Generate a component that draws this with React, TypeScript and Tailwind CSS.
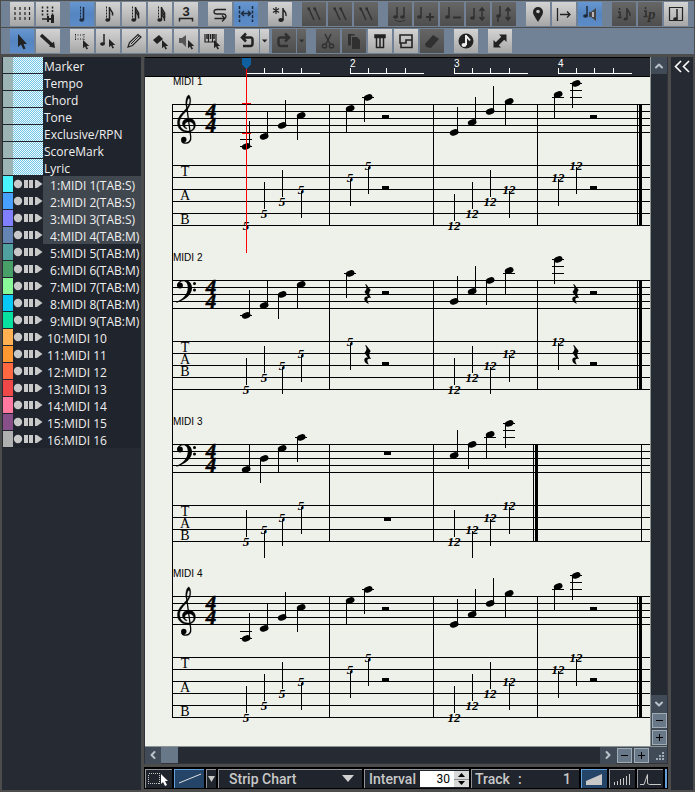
import type { ReactNode } from "react";
import { clsx } from "clsx";
import { ChevronUp, ChevronDown, ChevronLeft, ChevronRight } from "lucide-react";

/* ---------- toolbar ---------- */

type Tone = "light" | "active" | "off";

const toneClass: Record<Tone, string> = {
  light: "text-[#222] bg-linear-to-b from-[#d3d3d3] via-[#bebebe] to-[#a6a6a6]",
  active: "text-[#1d2b3d] bg-linear-to-b from-[#6797d0] via-[#5585c0] to-[#5d8dc8]",
  off: "text-[#303030] bg-linear-to-b from-[#666] via-[#5a5a5a] to-[#4e4e4e]",
};

interface Tool {
  label: string;
  tone?: Tone;
  icon: ReactNode;
}

function ToolButton({ label, tone = "light", icon }: Tool) {
  return (
    <button aria-label={label} className={clsx("w-6 h-6 shrink-0", toneClass[tone])}>
      <svg viewBox="0 0 24 24" className="block w-6 h-6" fill="none" stroke="currentColor" strokeWidth="1.5">
        {icon}
      </svg>
    </button>
  );
}

function DropButton({ label, tone = "light" }: { label: string; tone?: Tone }) {
  return (
    <button aria-label={label} className={clsx("w-[9px] h-6 shrink-0", toneClass[tone])}>
      <svg viewBox="0 0 9 24" className="block w-[9px] h-6" fill="currentColor">
        <path d="M2 10.500h5.400L4.700 13.500z" />
      </svg>
    </button>
  );
}

const Pointer = ({ x, y }: { x: number; y: number }) => (
  <path d={`M${x} ${y}v8.200l2-1.600 1.500 3 1.500-.8-1.500-2.800h2.800z`} fill="currentColor" stroke="none" />
);

const NoteStem = ({ flags = 0 }: { flags?: number }) => (
  <>
    <path d="M10.500 4.500v14" strokeDasharray="2 1" strokeWidth="1" />
    <path d="M13.500 5v13" />
    <ellipse cx="11.700" cy="18" rx="2.400" ry="1.700" fill="currentColor" stroke="none" />
    {flags > 0 && <path d="M13.500 6c.5 2.500 4 3 3 7.500" />}
    {flags > 1 && <path d="M13.500 9c.5 2.500 4 3 3 7.500" />}
    {flags > 2 && <path d="M13.500 12c.5 2.500 4 3 3 7" />}
  </>
);

const Strings = () => (
  <g strokeWidth="1.500">
    <path d="M7 7l5 11M13 7l5 11" />
    <path d="M5 5.500h3v3H6zM11 5.500h3v3h-2z" fill="currentColor" stroke="none" />
  </g>
);

const SmallNote = ({ x, y }: { x: number; y: number }) => (
  <>
    <path d={`M${x + 4} ${y}v10`} />
    <ellipse cx={x + 2.5} cy={y + 10} rx="2.400" ry="1.700" fill="currentColor" stroke="none" />
  </>
);

const topTools: Tool[][] = [
  [
    { label: "Grid", icon: <path d="M6.500 5v15M11.500 5v15M16.500 5v15M21 5v15" transform="translate(-1.500)" strokeDasharray="3 2" strokeWidth="1.200" /> },
    {
      label: "Snap to grid",
      icon: (
        <>
          <path d="M6.500 4.500v9M11.500 4.500v9M16.500 4.500v9" strokeDasharray="2 1.500" />
          <path d="M6 17h12" />
          <path d="M11 14h2v2h2v-3h3v8h-3v-3h-2v2h-2z" fill="currentColor" stroke="none" />
        </>
      ),
    },
  ],
  [
    { label: "Quarter", tone: "active", icon: <NoteStem /> },
    { label: "Eighth", icon: <NoteStem flags={1} /> },
    { label: "Sixteenth", icon: <NoteStem flags={2} /> },
    { label: "Thirty-second", icon: <NoteStem flags={3} /> },
    {
      label: "Triplet",
      icon: (
        <>
          <text x="12" y="14" textAnchor="middle" fill="currentColor" stroke="none" fontSize="13" fontWeight="700" fontFamily="Liberation Sans, sans-serif">3</text>
          <path d="M5.500 19.500v-3h13v3" />
        </>
      ),
    },
  ],
  [
    { label: "Loop", icon: <path d="M18 7.500H9c-4 0-4 4.500 0 4.500h6M6.500 16.500H17M15 12c4 0 3 3 2.500 4M14 13.500l3 3-3 3" strokeWidth="1.300" /> },
    {
      label: "Fit width",
      tone: "active",
      icon: (
        <>
          <path d="M5.500 4v16M18.500 4v16" strokeDasharray="3 1.500" />
          <path d="M7 11.500h10M10 9l-2.500 2.500L10 14M14 9l2.500 2.500L14 14" />
        </>
      ),
    },
  ],
  [
    {
      label: "New note",
      icon: (
        <>
          <path d="M8 5v7M5 6.500l6 4M11 6.500l-6 4" strokeWidth="1.200" />
          <path d="M15 6v12M15 7c1 3 4 3 3 7" />
          <ellipse cx="13" cy="18" rx="2.700" ry="2" fill="currentColor" stroke="none" />
        </>
      ),
    },
  ],
  [
    { label: "Tremolo 1", tone: "off", icon: <Strings /> },
    { label: "Tremolo 2", tone: "off", icon: <Strings /> },
    { label: "Tremolo 3", tone: "off", icon: <Strings /> },
  ],
  [
    { label: "Tie", tone: "off", icon: <><SmallNote x={5} y={5} /><SmallNote x={12} y={5} /><path d="M7 18c3 2 7 2 10 0" strokeWidth="1" /></> },
    { label: "Add note", tone: "off", icon: <><SmallNote x={3} y={5} /><path d="M16 11v8M12 15h8" strokeWidth="2" /></> },
    { label: "Remove note", tone: "off", icon: <><SmallNote x={5} y={5} /><path d="M13 15.500h8" strokeWidth="2" /></> },
    { label: "Move voice", tone: "off", icon: <><SmallNote x={4} y={6} /><path d="M16 6v12M13.500 9L16 6l2.500 3M13.500 15l2.500 3 2.500-3" /></> },
    { label: "Move staff", tone: "off", icon: <><SmallNote x={4} y={4} /><path d="M6 14v6M16 6v12M13.500 9L16 6l2.500 3M13.500 15l2.500 3 2.500-3" /></> },
  ],
  [
    { label: "Marker pin", icon: <><path d="M12 20C9 15 7 12.500 7 10a5 5 0 0 1 10 0c0 2.500-2 5-5 10z" fill="currentColor" stroke="none" /><circle cx="12" cy="9.500" r="1.800" fill="#c4c4c4" stroke="none" /></> },
    { label: "Play from here", icon: <path d="M5.500 6v13M8 12.500h10M15 9.500l3 3-3 3" strokeWidth="1.300" /> },
    {
      label: "Note sound",
      tone: "active",
      icon: (
        <>
          <SmallNote x={5} y={4} />
          <path d="M11 10h2l5-4v13l-5-4h-2z" fill="#444" stroke="none" />
          <path d="M14 10h2v5h-2z" fill="#b8b8b8" stroke="none" />
        </>
      ),
    },
  ],
  [
    { label: "Note info", tone: "off", icon: <><path d="M7.500 6v2M6 10h2v5M5.500 15.500h4M15 6v11M15 7c1 3 4 3 3 7" /><ellipse cx="13.500" cy="17" rx="2" ry="1.500" fill="currentColor" stroke="none" /></> },
    {
      label: "Dynamics info",
      tone: "off",
      icon: (
        <>
          <path d="M7.500 5v2M6 9h2v5M5.500 14.500h4" />
          <text x="10" y="17" fill="currentColor" stroke="none" fontSize="15" fontWeight="700" fontStyle="italic" fontFamily="Liberation Serif, serif">p</text>
        </>
      ),
    },
    { label: "Score frame", icon: <><path d="M5.500 5.500h13v13h-13z" strokeWidth="1.200" /><SmallNote x={9} y={7} /></> },
  ],
];

const eraser = <path d="M5 15l8-9 6 4-8 9-5-1z" fill="currentColor" stroke="none" />;

const editLeft: Tool[][] = [
  [
    { label: "Select", tone: "active", icon: <path d="M8 5v13l3-2.500 2.500 5 2-1-2-4.500h3.500z" fill="#222" stroke="none" /> },
    { label: "Draw line", icon: <><path d="M5 6l11 10" strokeWidth="3.500" /><path d="M13 17.500L18 12.500 19 19z" fill="currentColor" stroke="none" /></> },
  ],
  [
    { label: "Range select", icon: <><path d="M5 6h10M5 10h9M5.500 5v6M14 5v6" strokeDasharray="1 1.500" strokeWidth="1" /><Pointer x={13} y={11} /></> },
    { label: "Note select", icon: <><SmallNote x={4} y={5} /><Pointer x={13} y={10} /></> },
    { label: "Pencil", icon: <><path d="M6 18l1.500-4.500L16 5.500l3 2.500-8.500 8.500z" strokeWidth="1.200" /><path d="M9 15l8-8" strokeWidth="1" /></> },
    { label: "Eraser", icon: <><path d="M5 11l6-5 4 4-6 5z" fill="currentColor" stroke="none" /><Pointer x={14} y={11} /></> },
    { label: "Audition", icon: <><path d="M5 9h3l4-3v12l-4-4H5z" fill="#555" stroke="none" /><Pointer x={14} y={11} /></> },
    { label: "Keyboard", icon: <><path d="M5 5v8h11V5M8.500 5v8M12.500 5v8" strokeWidth="1.200" /><path d="M7 5v5M10.500 5v5M14 5v5" strokeWidth="1.500" /><Pointer x={14} y={11} /></> },
  ],
];

const undo = <path d="M9 8.500h6.500c2 0 2 1 2 2.500v3.500c0 2-1 2.500-2 2.500H8M11 4.500l-4 4 4 4" strokeWidth="2.500" />;
const redo = <path d="M15 8.500H8.500c-2 0-2 1-2 2.500v3.500c0 2 1 2.500 2 2.500H16M13 4.500l4 4-4 4" strokeWidth="2.500" />;

const editRight: Tool[][] = [
  [
    { label: "Cut", tone: "off", icon: <><path d="M9 5l5 10M15 5l-5 10" /><circle cx="8.500" cy="17" r="2" /><circle cx="15.500" cy="17" r="2" /></> },
    { label: "Copy", tone: "off", icon: <path d="M6 5h6l1 1.500H9v10H6zM10 8h5l3 3v9h-8z" fill="currentColor" stroke="none" /> },
    { label: "Paste", icon: <><path d="M7 6h10v2.500H7z" fill="currentColor" /><path d="M8.500 9v9.500h7V9M12 9v9" strokeWidth="1.500" /></> },
    { label: "Merge", icon: <path d="M6 6h12v5h-6v3H6zM7 14v4.500h11v-7" strokeWidth="1.600" /> },
    { label: "Clear", tone: "off", icon: eraser },
  ],
  [
    {
      label: "Score",
      icon: (
        <>
          <circle cx="12" cy="12" r="7.500" fill="currentColor" stroke="none" />
          <path d="M12 6v10M12 6.500l4 5" stroke="#eee" strokeWidth="2" />
          <ellipse cx="10" cy="16" rx="2.500" ry="2" fill="#eee" stroke="none" />
        </>
      ),
    },
  ],
  [{ label: "Expand", icon: <><path d="M8 16l8-8" strokeWidth="4" /><path d="M11 5.500h7.500V13zM5.500 11v7.500H13z" fill="currentColor" stroke="none" /></> }],
];

function ToolGroups({ groups }: { groups: Tool[][] }) {
  return (
    <>
      {groups.map((group) => (
        <div key={group[0].label} className="flex gap-[2px]">
          {group.map((tool) => (
            <ToolButton key={tool.label} {...tool} />
          ))}
        </div>
      ))}
    </>
  );
}

/* ---------- track list ---------- */

const conductorTracks = ["Marker", "Tempo", "Chord", "Tone", "Exclusive/RPN", "ScoreMark", "Lyric"];

const tracks = [
  { name: " 1:MIDI 1(TAB:S)", color: "bg-[#48f4ff]", selected: true },
  { name: " 2:MIDI 2(TAB:S)", color: "bg-[#48a0ff]", selected: true },
  { name: " 3:MIDI 3(TAB:S)", color: "bg-[#8080ff]", selected: true },
  { name: " 4:MIDI 4(TAB:M)", color: "bg-[#6484b4]", selected: true },
  { name: " 5:MIDI 5(TAB:M)", color: "bg-[#50a0a0]" },
  { name: " 6:MIDI 6(TAB:M)", color: "bg-[#48a068]" },
  { name: " 7:MIDI 7(TAB:M)", color: "bg-[#88f898]" },
  { name: " 8:MIDI 8(TAB:M)", color: "bg-[#08c8f8]" },
  { name: " 9:MIDI 9(TAB:M)", color: "bg-[#08e0a0]" },
  { name: "10:MIDI 10", color: "bg-[#ffb050]" },
  { name: "11:MIDI 11", color: "bg-[#ff9830]" },
  { name: "12:MIDI 12", color: "bg-[#ff6840]" },
  { name: "13:MIDI 13", color: "bg-[#f04848]" },
  { name: "14:MIDI 14", color: "bg-[#ff78a0]" },
  { name: "15:MIDI 15", color: "bg-[#885088]" },
  { name: "16:MIDI 16", color: "bg-[#b0b0b0]" },
];

function TrackList() {
  return (
    <aside className="w-[139px] shrink-0 bg-[#262a32] pl-px font-['Open_Sans','Noto_Sans',sans-serif] text-xs leading-4 text-[#f0f0f0]">
      <ul className="bg-[#20242c]">
        {conductorTracks.map((name) => (
          <li key={name} className="flex h-[17px]">
            <span className="w-2.5 h-4 bg-[#9cb4b4]" />
            <span className="w-[30px] h-4 bg-[#a4def0] bg-[conic-gradient(#f4f8fa_25%,#70c8e8_0_50%,#f4f8fa_0_75%,#70c8e8_0)] bg-size-[2px_2px]" />
            <button className="pl-px pt-[2px] whitespace-nowrap text-left">{name}</button>
          </li>
        ))}
        {tracks.map(({ name, color, selected }) => (
          <li key={name} className="flex h-[17px]">
            <span className={clsx("w-2.5 h-4", color)} />
            <svg className="w-[30px] h-4" viewBox="0 0 30 16" fill="#c8c8c8">
              <circle cx="5" cy="8" r="4.200" />
              <path d="M11 4h4v8h-4zM16 4h4v8h-4zM22 4h2l5.500 4-5.500 4h-2z" />
            </svg>
            <button className={clsx("flex-1 h-[17px] pl-1 pt-[2px] whitespace-pre text-left", selected && "bg-[#41474f]")}>{name}</button>
          </li>
        ))}
      </ul>
    </aside>
  );
}

/* ---------- score ---------- */

// Horizontal position of every beat, measured from the left edge of the score
const BEATS = [
  [101, 119, 137, 156],
  [205, 223, 241, 260],
  [309, 327, 345, 364],
  [413, 431, 449, 468],
];

// step: half spaces below the top staff line, line: tab line counted from the top
interface Note {
  bar: number;
  beat: number;
  step: number;
  line: number;
  up?: boolean;
}

interface Rest {
  bar: number;
  kind: "quarter" | "half" | "whole";
}

interface Part {
  name: string;
  clef: "treble" | "bass";
  top: number;
  tabTop: number;
  tabLines: number;
  letters: number[];
  bars: number[];
  end: number;
  notes: Note[];
  rests: Rest[];
}

const guitarNotes: Note[] = [
  { bar: 0, beat: 0, step: 12, line: 5, up: true },
  { bar: 0, beat: 1, step: 9, line: 4, up: true },
  { bar: 0, beat: 2, step: 6, line: 3, up: true },
  { bar: 0, beat: 3, step: 3, line: 2 },
  { bar: 1, beat: 0, step: 1, line: 1 },
  { bar: 1, beat: 1, step: -2, line: 0 },
  { bar: 2, beat: 0, step: 8, line: 5, up: true },
  { bar: 2, beat: 1, step: 5, line: 4, up: true },
  { bar: 2, beat: 2, step: 2, line: 3, up: true },
  { bar: 2, beat: 3, step: -1, line: 2 },
  { bar: 3, beat: 0, step: -3, line: 1 },
  { bar: 3, beat: 1, step: -6, line: 0 },
];

const guitarRests: Rest[] = [
  { bar: 1, kind: "half" },
  { bar: 3, kind: "half" },
];

const parts: Part[] = [
  { name: "MIDI 1", clef: "treble", top: 27, tabTop: 88, tabLines: 6, letters: [99, 123, 147], bars: [184, 288, 392], end: 492, notes: guitarNotes, rests: guitarRests },
  {
    name: "MIDI 2",
    clef: "bass",
    top: 203,
    tabTop: 264,
    tabLines: 5,
    letters: [275, 287, 299],
    bars: [184, 288, 392],
    end: 492,
    notes: [
      { bar: 0, beat: 0, step: 10, line: 4, up: true },
      { bar: 0, beat: 1, step: 7, line: 3, up: true },
      { bar: 0, beat: 2, step: 4, line: 2 },
      { bar: 0, beat: 3, step: 1, line: 1 },
      { bar: 1, beat: 0, step: -2, line: 0 },
      { bar: 2, beat: 0, step: 6, line: 4, up: true },
      { bar: 2, beat: 1, step: 3, line: 3, up: true },
      { bar: 2, beat: 2, step: 0, line: 2 },
      { bar: 2, beat: 3, step: -3, line: 1 },
      { bar: 3, beat: 0, step: -6, line: 0 },
    ],
    rests: [
      { bar: 1, kind: "quarter" },
      { bar: 1, kind: "half" },
      { bar: 3, kind: "quarter" },
      { bar: 3, kind: "half" },
    ],
  },
  {
    name: "MIDI 3",
    clef: "bass",
    top: 367,
    tabTop: 428,
    tabLines: 4,
    letters: [439, 451, 463],
    bars: [184, 288, 496],
    end: 388,
    notes: [
      { bar: 0, beat: 0, step: 7, line: 3, up: true },
      { bar: 0, beat: 1, step: 4, line: 2 },
      { bar: 0, beat: 2, step: 1, line: 1 },
      { bar: 0, beat: 3, step: -2, line: 0 },
      { bar: 2, beat: 0, step: 3, line: 3, up: true },
      { bar: 2, beat: 1, step: 0, line: 2 },
      { bar: 2, beat: 2, step: -3, line: 1 },
      { bar: 2, beat: 3, step: -6, line: 0 },
    ],
    rests: [{ bar: 1, kind: "whole" }],
  },
  { name: "MIDI 4", clef: "treble", top: 519, tabTop: 580, tabLines: 6, letters: [591, 615, 639], bars: [184, 288, 392], end: 492, notes: guitarNotes, rests: guitarRests },
];

function TrebleClef({ y }: { y: number }) {
  return (
    <g transform={`translate(32 ${y})`} shapeRendering="auto">
      <path d="M9 2C8.200-4 10-9 12-9c2 2 2.200 7 .8 10.500C11 6 6.500 9.500 4.300 13 2.800 15.500 2.500 17.500 2.700 19.500 3 24 6.500 27 11 27c3.500 0 5.800-2.200 5.800-5 0-2.500-2-4.300-4.800-4.300-2.700 0-4.200 1.500-4.200 3.300 0 1.600.8 2.600 2.200 3.400l-.4.6C7 24 5.400 22 5.400 19.800c0-3.300 2.900-5.600 6.600-5.600 3.800 0 6.400 2.800 6.400 6.800 0 4.400-3.400 7.200-7.900 7.200C4.500 28.200.5 24.500.5 18.800.5 14 3.500 10.500 7 7c3-3 5-5.500 5.600-8.500.4-2.500 0-4.300-.6-4.300C10.800-5.600 9.800-2.500 10 1z" stroke="#000" strokeWidth=".4" />
      <path d="M9.500 1l4.200 31.500c.6 4.500-2 6.700-5 6.700-2 0-3.500-1-4-2.700" fill="none" stroke="#000" strokeWidth="1.300" />
      <circle cx="6.800" cy="35.500" r="2.700" />
    </g>
  );
}

function BassClef({ y }: { y: number }) {
  return (
    <g transform={`translate(31 ${y})`} shapeRendering="auto">
      <path d="M1.200 6C1 2.500 4 0 8 0c5 0 8 3 8 8 0 7-7 12-15.500 14.800L.3 22C7 19 11.800 14.500 11.800 7.500c0-4-1.500-6.300-4.500-6.300C4.500 1.200 2.500 3 2.600 5z" />
      <circle cx="4" cy="5.500" r="2.900" />
      <circle cx="18.500" cy="3.500" r="1.500" />
      <circle cx="18.500" cy="10" r="1.500" />
    </g>
  );
}

function QuarterRest({ x, y }: { x: number; y: number }) {
  return (
    <path
      transform={`translate(${x} ${y})`}
      shapeRendering="auto"
      d="M2 0l4.700 6c-2 2.500-2 4.500.5 8-3-1-4.200.5-3.800 2 .3 2 1.600 4 1.600 4C1.500 18.500 0 16.500.3 14.500c.5-1.700 2.200-2.200 3.700-1.700L.5 8C3 5 3 3.500 1.200.6z"
    />
  );
}

function ledgerSteps(step: number) {
  const out: number[] = [];
  for (let s = -2; s >= step; s -= 2) out.push(s);
  for (let s = 10; s <= step; s += 2) out.push(s);
  return out;
}

function PartStaff({ part }: { part: Part }) {
  const { top, tabTop, tabLines, end } = part;
  const height = tabTop + (tabLines - 1) * 12 - top + 1;
  const lines = [
    ...[0, 1, 2, 3, 4].map((i) => top + i * 7),
    ...Array.from({ length: tabLines }, (_, i) => tabTop + i * 12),
  ];

  return (
    <g>
      <text x="28" y={top - 19} fontSize="10" fontFamily="Liberation Sans, sans-serif">{part.name}</text>
      {lines.map((y) => (
        <rect key={y} x="27" y={y} width="100%" height="1" />
      ))}
      {part.bars.map((x) => (
        <rect key={x} x={x} y={top} width="1" height={height} />
      ))}
      <rect x={end} y={top} width="1" height={height} />
      <rect x={end + 2} y={top} width="3" height={height} />

      {part.clef === "treble" ? <TrebleClef y={top} /> : <BassClef y={top} />}
      <text fontFamily="Liberation Serif, serif" fontSize="21" fontWeight="700" fontStyle="italic" textAnchor="middle" stroke="#000" strokeWidth=".5">
        <tspan x="66" y={top + 14}>4</tspan>
        <tspan x="66" y={top + 28}>4</tspan>
      </text>
      <g fontFamily="Liberation Serif, serif" fontSize="14" textAnchor="middle">
        {["T", "A", "B"].map((letter, i) => (
          <text key={letter} x="40" y={part.letters[i]}>{letter}</text>
        ))}
      </g>

      {part.notes.map((n) => {
        const x = BEATS[n.bar][n.beat];
        const y = top + Math.round(n.step * 3.5);
        const ty = tabTop + n.line * 12;
        return (
          <g key={`${n.bar}-${n.beat}`}>
            <ellipse cx={x} cy={y + 0.5} rx="4.500" ry="3" transform={`rotate(-20 ${x} ${y})`} shapeRendering="auto" />
            <rect x={n.up ? x + 3 : x - 4} y={n.up ? y - 25 : y} width="1" height="25" />
            {ledgerSteps(n.step).map((s) => (
              <rect key={s} x={x - 6} y={top + s * 3.5} width="12" height="1" />
            ))}
            <text x={x} y={ty + 5} textAnchor="middle" fontSize="13" fontWeight="700" fontStyle="italic" fontFamily="Liberation Serif, serif">
              {n.bar < 2 ? "5" : "12"}
            </text>
            <rect x={x} y={n.up ? ty - 31 : ty + 2} width="1" height="27" />
          </g>
        );
      })}

      {part.rests.map(({ bar, kind }) => {
        const x = BEATS[bar][0];
        if (kind === "quarter") {
          return (
            <g key={`${bar}-${kind}`}>
              <QuarterRest x={x + 14} y={top + 4} />
              <QuarterRest x={x + 14} y={tabTop + 4} />
            </g>
          );
        }
        if (kind === "whole") {
          return (
            <g key={`${bar}-${kind}`}>
              <rect x={x + 34} y={top + 7} width="7" height="4" />
              <rect x={x + 34} y={tabTop + 12} width="7" height="4" />
            </g>
          );
        }
        return (
          <g key={`${bar}-${kind}`}>
            <rect x={x + 32} y={top + 11} width="7" height="3" />
            <rect x={x + 32} y={tabTop + 21} width="7" height="3" />
          </g>
        );
      })}
    </g>
  );
}

function Ruler() {
  return (
    <svg className="block w-full h-5 bg-[#262a32]" shapeRendering="crispEdges" role="img" aria-label="Measures">
      <rect width="100%" height="1" fill="#000" />
      <rect y="19" width="100%" height="1" fill="#000" />
      <g fill="#fff" fontFamily="Liberation Sans, sans-serif" fontSize="10">
        {BEATS.map((beats, bar) => (
          <g key={bar}>
            <rect x={beats[0]} y="16" width="74" height="1" />
            {beats.map((x) => (
              <rect key={x} x={x} y="11" width="1" height="5" />
            ))}
            {bar > 0 && <text x={beats[0]} y="10">{bar + 1}</text>}
          </g>
        ))}
      </g>
      <rect x="101" y="10" width="1" height="10" fill="#f00" />
      <path d="M97 1h9v7l-4.500 4-4.500-4z" fill="#1060a0" />
    </svg>
  );
}

function Score() {
  return (
    <svg className="block w-full h-[669px] bg-[#eef1ea]" shapeRendering="crispEdges" role="img" aria-label="Score">
      <rect x="27" y="27" width="1" height="614" />
      {parts.map((part) => (
        <PartStaff key={part.name} part={part} />
      ))}
      <g fill="#f00">
        <rect x="101" width="1" height="176" />
        <rect x="97" y="26" width="9" height="1" />
        <rect x="97" y="56" width="9" height="1" />
      </g>
    </svg>
  );
}

/* ---------- scroll bars ---------- */

function ArrowButton({ label, children }: { label: string; children: ReactNode }) {
  return (
    <button aria-label={label} className="w-4 h-[17px] shrink-0 flex items-center justify-center bg-[#414b57] text-[#b8c4cc]">
      {children}
    </button>
  );
}

function ZoomButton({ label, plus }: { label: string; plus?: boolean }) {
  return (
    <button aria-label={label} className="w-[15px] h-[15px] shrink-0 bg-[#687888] border border-[#a0acb4]">
      <svg viewBox="0 0 13 13" className="block w-[13px] h-[13px]" shapeRendering="crispEdges">
        <path d="M3 6h7v1H3z" />
        {plus && <path d="M6 3h1v7H6z" />}
      </svg>
    </button>
  );
}

function ScorePane() {
  return (
    <section className="border border-[#30343a] border-t-0">
      <div className="flex">
        <div className="flex-1 min-w-0">
          <Ruler />
          <Score />
        </div>
        <div className="w-[17px] shrink-0 flex flex-col items-center border-l border-[#8c9494] bg-[#262a32]">
          <ArrowButton label="Scroll up"><ChevronUp size={12} strokeWidth={4} /></ArrowButton>
          <div className="flex-1" />
          <ArrowButton label="Scroll down"><ChevronDown size={12} strokeWidth={4} /></ArrowButton>
          <div className="w-4 flex flex-col items-center gap-[2px] bg-[#414b57] pt-px pb-px">
            <ZoomButton label="Zoom out vertically" />
            <ZoomButton label="Zoom in vertically" plus />
          </div>
        </div>
      </div>
      <div className="h-[17px] flex items-center border-t border-[#8c9494] bg-[#262a32]">
        <ArrowButton label="Scroll left"><ChevronLeft size={12} strokeWidth={4} /></ArrowButton>
        <div className="w-[17px] h-4 bg-[#687888]" />
        <div className="flex-1" />
        <ArrowButton label="Scroll right"><ChevronRight size={12} strokeWidth={4} /></ArrowButton>
        <div className="h-4 flex items-center gap-[2px] bg-[#414b57] px-px">
          <ZoomButton label="Zoom out horizontally" />
          <ZoomButton label="Zoom in horizontally" plus />
        </div>
        <svg viewBox="0 0 17 16" className="w-[17px] h-4 bg-[#414b57]" fill="#a0acb4" shapeRendering="crispEdges">
          <path d="M12 5h2v2h-2zM9 8h2v2H9zM12 8h2v2h-2zM6 11h2v2H6zM9 11h2v2H9zM12 11h2v2h-2z" />
        </svg>
      </div>
    </section>
  );
}

/* ---------- bottom bar ---------- */

function ModeButton({ label, active, className, children }: { label: string; active?: boolean; className: string; children: ReactNode }) {
  return (
    <button aria-label={label} className={clsx("h-[19px] shrink-0 border-t border-l", active ? "bg-[#244468] border-[#64a0dc]" : "bg-[#20242c] border-[#909498]", className)}>
      {children}
    </button>
  );
}

function BottomBar() {
  return (
    <footer className="mt-[3px] h-[22px] flex items-center gap-[2px] bg-black px-px overflow-hidden font-[Roboto,sans-serif] text-sm leading-4 font-medium text-[#c8c8c8]">
      <ModeButton label="Area select" className="w-[27px]">
        <svg viewBox="0 0 25 18" className="block w-[25px] h-[18px]" shapeRendering="crispEdges">
          <path d="M2.500 3.500h11v10h-11z" fill="none" stroke="#c8c8c8" strokeDasharray="1 1" />
          <path d="M15 4v10l2-2 2 4 2-1-2-4h3z" fill="#fff" shapeRendering="auto" />
        </svg>
      </ModeButton>
      <ModeButton label="Line" active className="w-[30px]">
        <svg viewBox="0 0 29 18" className="block w-[29px] h-[18px]">
          <path d="M4 13L26 4" stroke="#e0e0e0" />
        </svg>
      </ModeButton>
      <ModeButton label="Line type" className="w-[10px]">
        <svg viewBox="0 0 9 18" className="block w-[9px] h-[18px]" fill="#c8c8c8">
          <path d="M1 6h7l-3.500 6z" />
        </svg>
      </ModeButton>
      <div className="relative flex-1 min-w-0 h-[19px] border-t border-l border-[#909498] bg-[#20242c]">
        <select aria-label="Chart" className="w-full h-[18px] appearance-none bg-transparent pl-2.5 outline-none">
          <option>Strip Chart</option>
        </select>
        <svg viewBox="0 0 12 7" className="absolute right-2 top-[5px] w-3 h-[7px] pointer-events-none" fill="#d0d0d0">
          <path d="M0 0h12L6 7z" />
        </svg>
      </div>
      <label className="h-[19px] flex items-center border-t border-l border-[#909498] bg-[#20242c] pl-1">
        <span className="w-[51px]">Interval</span>
        <input defaultValue="30" className="w-[34px] h-4 bg-white pr-1 text-right text-xs text-black font-normal outline-none" />
        <span className="flex flex-col w-[15px] h-4 bg-[#d8d8d8]">
          <button aria-label="Increase" className="h-2 flex items-center justify-center">
            <svg viewBox="0 0 7 4" className="w-[7px] h-1"><path d="M0 4h7L3.500 0z" /></svg>
          </button>
          <button aria-label="Decrease" className="h-2 flex items-center justify-center border-t border-[#909090]">
            <svg viewBox="0 0 7 4" className="w-[7px] h-1"><path d="M0 0h7L3.500 4z" /></svg>
          </button>
        </span>
      </label>
      <div className="w-[108px] h-[19px] shrink-0 flex items-center border-t border-l border-[#909498] bg-[#20242c] pl-[3px] pr-2">
        <span>Track</span>
        <span className="ml-2">:</span>
        <span className="ml-auto">1</span>
      </div>
      <ModeButton label="Ramp" active className="w-[26px]">
        <svg viewBox="0 0 25 18" className="block w-[25px] h-[18px]" fill="#c8c8c8"><path d="M4 15v-4L20 4v11z" /></svg>
      </ModeButton>
      <ModeButton label="Bars" className="w-[26px]">
        <svg viewBox="0 0 25 18" className="block w-[25px] h-[18px]" fill="#c8c8c8" shapeRendering="crispEdges">
          <path d="M4 12h1v3H4zM7 11h1v4H7zM10 9h1v6h-1zM13 8h1v7h-1zM16 6h1v9h-1zM19 4h1v11h-1z" />
        </svg>
      </ModeButton>
      <ModeButton label="Curve" className="w-[26px]">
        <svg viewBox="0 0 25 18" className="block w-[25px] h-[18px]" fill="none" stroke="#c8c8c8">
          <path d="M2 14.500h4L9.500 4.500V13.500l2 1H23" />
        </svg>
      </ModeButton>
      <span className="w-0.5 h-[19px] bg-[#64a0dc]" />
    </footer>
  );
}

export default function App() {
  return (
    <div className="min-h-screen flex flex-col bg-[#4c4c4c] pt-px pl-px">
      <header className="flex flex-col gap-px">
        <div className="h-[26px] flex items-center gap-2.5 bg-[#728296] pl-[9px] mr-px overflow-hidden">
          <ToolGroups groups={topTools} />
        </div>
        <div className="h-[26px] flex items-center gap-2.5 bg-[#728296] pl-[9px] mr-px overflow-hidden">
          <ToolGroups groups={editLeft} />
          <div className="flex gap-[3px] pl-px">
            <div className="flex gap-px">
              <ToolButton label="Undo" icon={undo} />
              <DropButton label="Undo history" />
            </div>
            <div className="flex gap-px">
              <ToolButton label="Redo" tone="off" icon={redo} />
              <DropButton label="Redo history" tone="off" />
            </div>
          </div>
          <ToolGroups groups={editRight} />
        </div>
      </header>

      <main className="flex-1 flex gap-[3px] pt-[3px] pb-[2px] pl-px pr-[2px]">
        <TrackList />
        <div className="flex-1 min-w-0">
          <ScorePane />
          <BottomBar />
        </div>
        <aside className="w-[22px] shrink-0 bg-[#262a32] pt-[3px]">
          <button aria-label="Open side panel" className="block mx-auto">
            <svg viewBox="0 0 16 13" className="block w-4 h-[13px]" fill="none" stroke="#fff" strokeWidth="1.600">
              <path d="M7 1L1.500 6.500 7 12M15 1L9.500 6.500 15 12" />
            </svg>
          </button>
        </aside>
      </main>
    </div>
  );
}
